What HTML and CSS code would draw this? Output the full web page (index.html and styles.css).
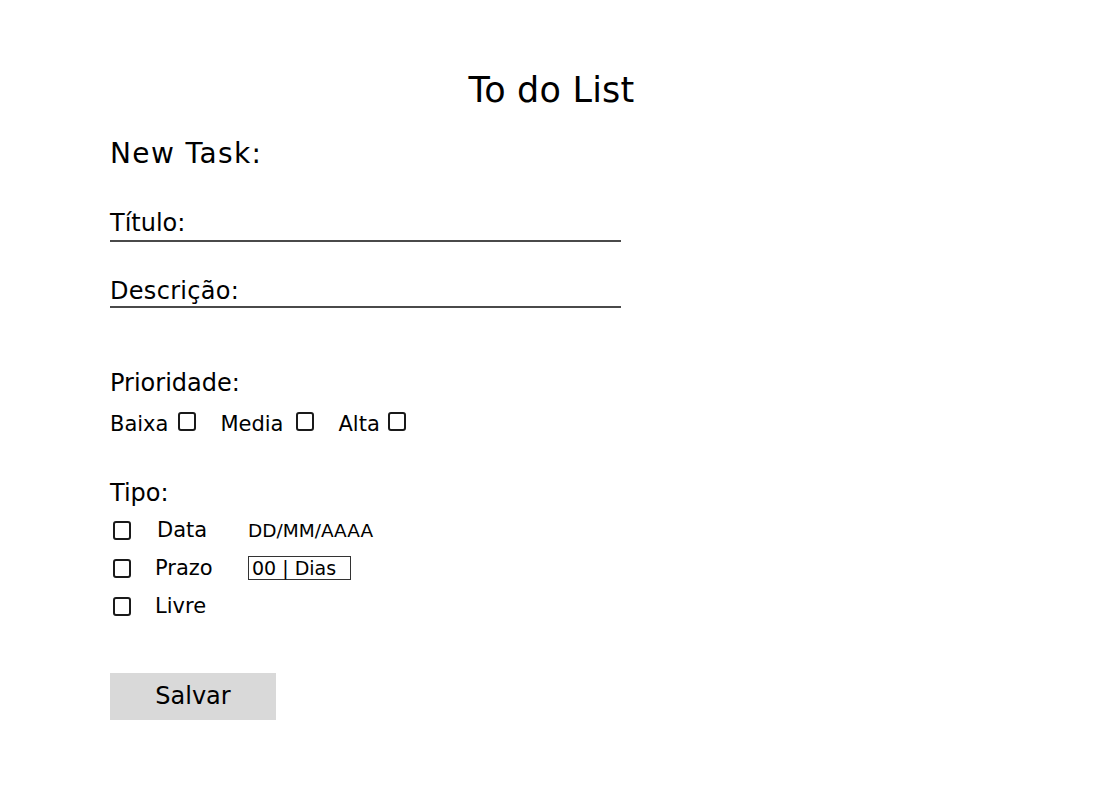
FILE: index.html
```html
<!DOCTYPE html>
<html lang="pt">
<head>
<meta charset="utf-8">
<title>To do List</title>
<link rel="stylesheet" href="styles.css">
</head>
<body>
<main class="page">
  <h1 class="title">To do List</h1>
  <section class="form">
    <h2 class="heading">New Task:</h2>
    <div class="field field-titulo">Título:</div>
    <div class="field field-desc">Descrição:</div>

    <div class="label label-prio">Prioridade:</div>
    <div class="options">
      <div class="option option-baixa"><span>Baixa</span><span class="box"></span></div>
      <div class="option option-media"><span>Media</span><span class="box"></span></div>
      <div class="option option-alta"><span>Alta</span><span class="box"></span></div>
    </div>

    <div class="label label-tipo">Tipo:</div>
    <div class="types">
      <div class="type-row">
        <span class="box"></span>
        <span class="type-name type-data">Data</span>
        <span class="type-value">DD/MM/AAAA</span>
      </div>
      <div class="type-row">
        <span class="box"></span>
        <span class="type-name">Prazo</span>
        <span class="type-input">00 | Dias</span>
      </div>
      <div class="type-row">
        <span class="box"></span>
        <span class="type-name">Livre</span>
      </div>
    </div>

    <button class="save">Salvar</button>
  </section>
</main>
</body>
</html>
```

FILE: styles.css
```css
* { box-sizing: border-box; }

html, body {
  margin: 0;
  padding: 0;
  background: #ffffff;
}

body {
  font-family: "DejaVu Sans", "Open Sans", sans-serif;
  color: #000;
  font-weight: normal;
}

.page {
  padding-top: 70px;
  width: 1103px;
}

.title {
  margin: 0;
  font-size: 35px;
  font-weight: normal;
  line-height: 40px;
  text-align: center;
  letter-spacing: 0.2px;
}

.form {
  padding-left: 110px;
}

.heading {
  margin: 27px 0 0;
  font-size: 28px;
  font-weight: normal;
  line-height: 34px;
  letter-spacing: 1.4px;
}

.field {
  width: 511px;
  font-size: 24px;
  line-height: 30px;
  border-bottom: 2px solid #4a4a4a;
}

.field-titulo {
  margin-top: 37px;
  padding-bottom: 2px;
}

.field-desc {
  margin-top: 34px;
  padding-bottom: 0;
  letter-spacing: 0.3px;
}

.label {
  font-size: 24px;
  line-height: 30px;
}

.label-prio { margin-top: 60px; }
.label-tipo { margin-top: 42px; }

.options {
  margin-top: 14px;
  display: flex;
  align-items: flex-start;
  gap: 24px;
  font-size: 21px;
  line-height: 24px;
}

.option {
  display: flex;
  align-items: flex-start;
}

.option-baixa { gap: 10px; }
.option-media { gap: 13px; }
.option-alta { gap: 8px; }

.box {
  display: inline-block;
  width: 18px;
  height: 19px;
  border: 2px solid #1a1a1a;
  border-radius: 3px;
  flex: none;
}

.types {
  margin-top: 10px;
  display: flex;
  flex-direction: column;
  gap: 14px;
}

.type-row {
  display: flex;
  align-items: center;
  height: 24px;
  padding-left: 3px;
}

.type-row .box {
  margin-right: 24px;
}

.type-name {
  width: 93px;
  font-size: 21px;
  line-height: 24px;
}

.type-data {
  padding-left: 2px;
}

.type-value {
  font-size: 18.5px;
  line-height: 24px;
  padding-top: 2px;
}

.type-input {
  width: 103px;
  height: 24px;
  border: 1px solid #333;
  font-size: 19px;
  line-height: 22px;
  padding-left: 3px;
}

.save {
  display: block;
  margin-top: 55px;
  width: 166px;
  height: 47px;
  border: none;
  background: #d9d9d9;
  font-family: inherit;
  font-size: 24px;
  color: #000;
  padding: 0 0 2px;
}
```
